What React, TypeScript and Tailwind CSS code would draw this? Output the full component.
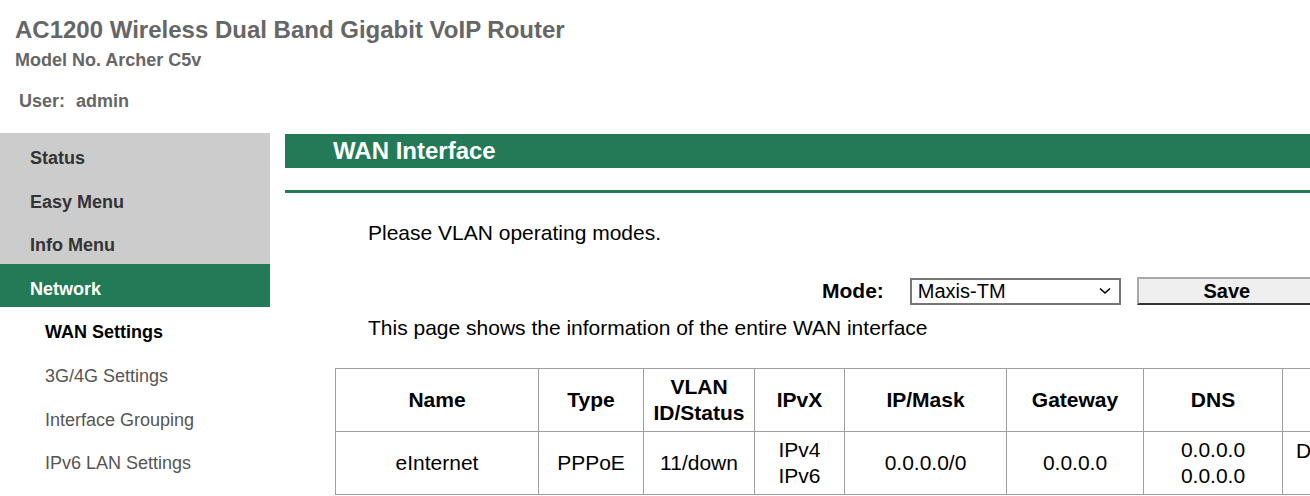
import React from "react";

const FONT = "font-['Liberation_Sans',Arial,sans-serif]";

const topMenu = [
  { label: "Status", active: false },
  { label: "Easy Menu", active: false },
  { label: "Info Menu", active: false },
  { label: "Network", active: true },
];

const subMenu = [
  { label: "WAN Settings", current: true },
  { label: "3G/4G Settings", current: false },
  { label: "Interface Grouping", current: false },
  { label: "IPv6 LAN Settings", current: false },
];

const cols = [203, 105, 111, 90, 162, 137, 139, 160];

export default function App() {
  return (
    <div
      className={`${FONT} h-[496px] w-[1310px] overflow-hidden bg-white text-black`}
    >
      {/* Header */}
      <header className="h-[133px] pl-[15px] pt-[16px] text-[#666]">
        <h1 className="text-[24px] font-bold leading-[28px]">
          AC1200 Wireless Dual Band Gigabit VoIP Router
        </h1>
        <div className="mt-[5px] text-[18px] font-bold leading-[22px]">
          Model No. Archer C5v
        </div>
        <div className="mt-[19px] flex pl-[4px] text-[18px] font-bold leading-[22px]">
          <span>User:</span>
          <span className="ml-[11px]">admin</span>
        </div>
      </header>

      <div className="flex">
        {/* Sidebar */}
        <nav className="w-[270px] shrink-0">
          <div className="bg-[#cccccc]">
            {topMenu.map((item) => (
              <div
                key={item.label}
                className={`flex h-[43.5px] items-center pl-[30px] pt-[8px] text-[18px] font-bold ${
                  item.active ? "bg-[#227a57] text-white" : "text-[#333]"
                }`}
              >
                {item.label}
              </div>
            ))}
          </div>
          <div className="pt-[4px]">
            {subMenu.map((item) => (
              <div
                key={item.label}
                className={`flex h-[43.7px] items-center pl-[45px] text-[18px] ${
                  item.current ? "font-bold text-black" : "text-[#555]"
                }`}
              >
                {item.label}
              </div>
            ))}
          </div>
        </nav>

        {/* Main */}
        <main className="ml-[15px] min-w-0 flex-1">
          <div className="mt-[1px] flex h-[34px] items-center bg-[#227a57] pl-[48px] text-[24px] font-bold text-white">
            WAN Interface
          </div>
          <div className="mt-[22px] h-[3px] bg-[#227a57]" />

          <p className="ml-[83px] mt-[28px] text-[21px] leading-[24px]">
            Please VLAN operating modes.
          </p>

          <div className="mt-[32px] flex items-center pl-[537px]">
            <span className="shrink-0 text-[21px] font-bold leading-[24px]">
              Mode:
            </span>
            <div className="ml-[26px] flex h-[27px] w-[211px] shrink-0 items-center justify-between border-2 border-[#767676] bg-white pl-[6px] pr-[8px] text-[20px] leading-none">
              <span>Maxis-TM</span>
              <svg width="12" height="8" viewBox="0 0 12 8">
                <polyline
                  points="1,1.5 6,6 11,1.5"
                  fill="none"
                  stroke="#000"
                  strokeWidth="1.6"
                />
              </svg>
            </div>
            <button
              type="button"
              className="ml-[16px] flex h-[28px] w-[180px] shrink-0 items-center justify-center border-2 border-[#a9a9a9] border-b-[#333] bg-[#efefef] text-[20px] font-bold leading-none"
            >
              Save
            </button>
          </div>

          <p className="ml-[83px] mt-[11px] text-[21px] leading-[24px]">
            This page shows the information of the entire WAN interface
          </p>

          <table className="ml-[50px] mt-[28px] w-[1107px] table-fixed border-collapse text-center text-[21px] leading-[26px]">
            <colgroup>
              {cols.map((w, i) => (
                <col key={i} style={{ width: w }} />
              ))}
            </colgroup>
            <thead>
              <tr className="h-[63px] font-bold">
                <th className="border border-[#a0a0a0]">Name</th>
                <th className="border border-[#a0a0a0]">Type</th>
                <th className="border border-[#a0a0a0]">
                  VLAN
                  <br />
                  ID/Status
                </th>
                <th className="border border-[#a0a0a0]">IPvX</th>
                <th className="border border-[#a0a0a0]">IP/Mask</th>
                <th className="border border-[#a0a0a0]">Gateway</th>
                <th className="border border-[#a0a0a0]">DNS</th>
                <th className="border border-[#a0a0a0]" />
              </tr>
            </thead>
            <tbody>
              <tr className="h-[63px]">
                <td className="border border-[#a0a0a0]">eInternet</td>
                <td className="border border-[#a0a0a0]">PPPoE</td>
                <td className="border border-[#a0a0a0]">11/down</td>
                <td className="border border-[#a0a0a0]">
                  IPv4
                  <br />
                  IPv6
                </td>
                <td className="border border-[#a0a0a0]">0.0.0.0/0</td>
                <td className="border border-[#a0a0a0]">0.0.0.0</td>
                <td className="border border-[#a0a0a0]">
                  0.0.0.0
                  <br />
                  0.0.0.0
                </td>
                <td className="border border-[#a0a0a0] pl-[13px] pt-[6px] text-left align-top">
                  Disconnected
                </td>
              </tr>
            </tbody>
          </table>
        </main>
      </div>
    </div>
  );
}
